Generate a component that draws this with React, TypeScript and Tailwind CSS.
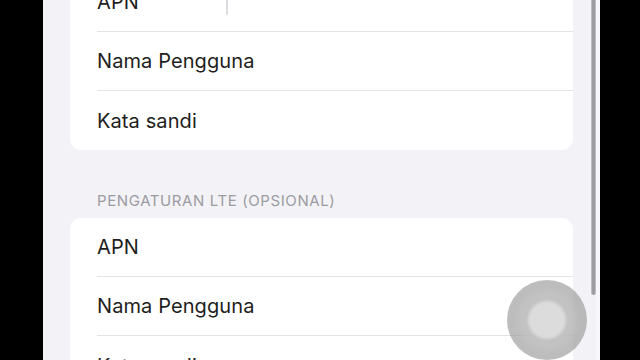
import React from 'react'

/* ─── Settings row ─── */
function Row({ label, last, cursor }: { label: string; last?: boolean; cursor?: boolean }) {
  return (
    <div className="pl-[27px]">
      <div
        className={
          'flex items-center h-[59px] ' + (last ? '' : 'border-b border-[#e4e4e8]')
        }
      >
        <span className="w-[129px] shrink-0 whitespace-nowrap text-[20px] text-[#1e1e20] tracking-[0.1px]">
          {label}
        </span>
        {cursor && <div className="w-[2px] h-[26px] bg-[#dcdce0] rounded-full" />}
      </div>
    </div>
  )
}

function Card({ rows, cursorFirst }: { rows: string[]; cursorFirst?: boolean }) {
  return (
    <div className="bg-white rounded-[11px] overflow-hidden">
      {rows.map((r, i) => (
        <Row key={i} label={r} last={i === rows.length - 1} cursor={cursorFirst && i === 0} />
      ))}
    </div>
  )
}

const fields = ['APN', 'Nama Pengguna', 'Kata sandi']

export default function App() {
  return (
    <div
      className="w-[640px] h-[360px] bg-black flex overflow-hidden"
      style={{ fontFamily: 'Inter, "Noto Sans", sans-serif' }}
    >
      <div className="w-[43px] shrink-0" />

      {/* Phone screen */}
      <div className="relative w-[557px] h-full bg-[#f2f2f7] overflow-hidden px-[27px]">
        <div className="mt-[-27px]">
          <Card rows={fields} cursorFirst />
        </div>

        <div className="mt-[42px] mb-[8px] h-[18px] pl-[27px] text-[15px] leading-[18px] text-[#9c9ca1] tracking-[0.6px] whitespace-nowrap">
          PENGATURAN LTE (OPSIONAL)
        </div>

        <Card rows={fields} />

        {/* Scroll indicator */}
        <div className="absolute top-0 left-[548px] w-[5px] h-[295px] rounded-b-full bg-[#9d9da2] border-x border-[#bdbdc2]" />
        <div className="absolute top-0 right-0 w-[4px] h-full bg-[#f8f8fa]" />

        {/* AssistiveTouch */}
        <div className="absolute left-[464px] top-[280px] w-[80px] h-[80px] rounded-full bg-[#9a9a9a]/65 flex items-center justify-center">
          <div className="w-[60px] h-[60px] rounded-full bg-[#c4c4c4]/70 blur-[3px]" />
          <div className="absolute w-[38px] h-[38px] rounded-full bg-[#dcdcdc] blur-[1.5px]" />
        </div>
      </div>

      <div className="flex-1" />
    </div>
  )
}
